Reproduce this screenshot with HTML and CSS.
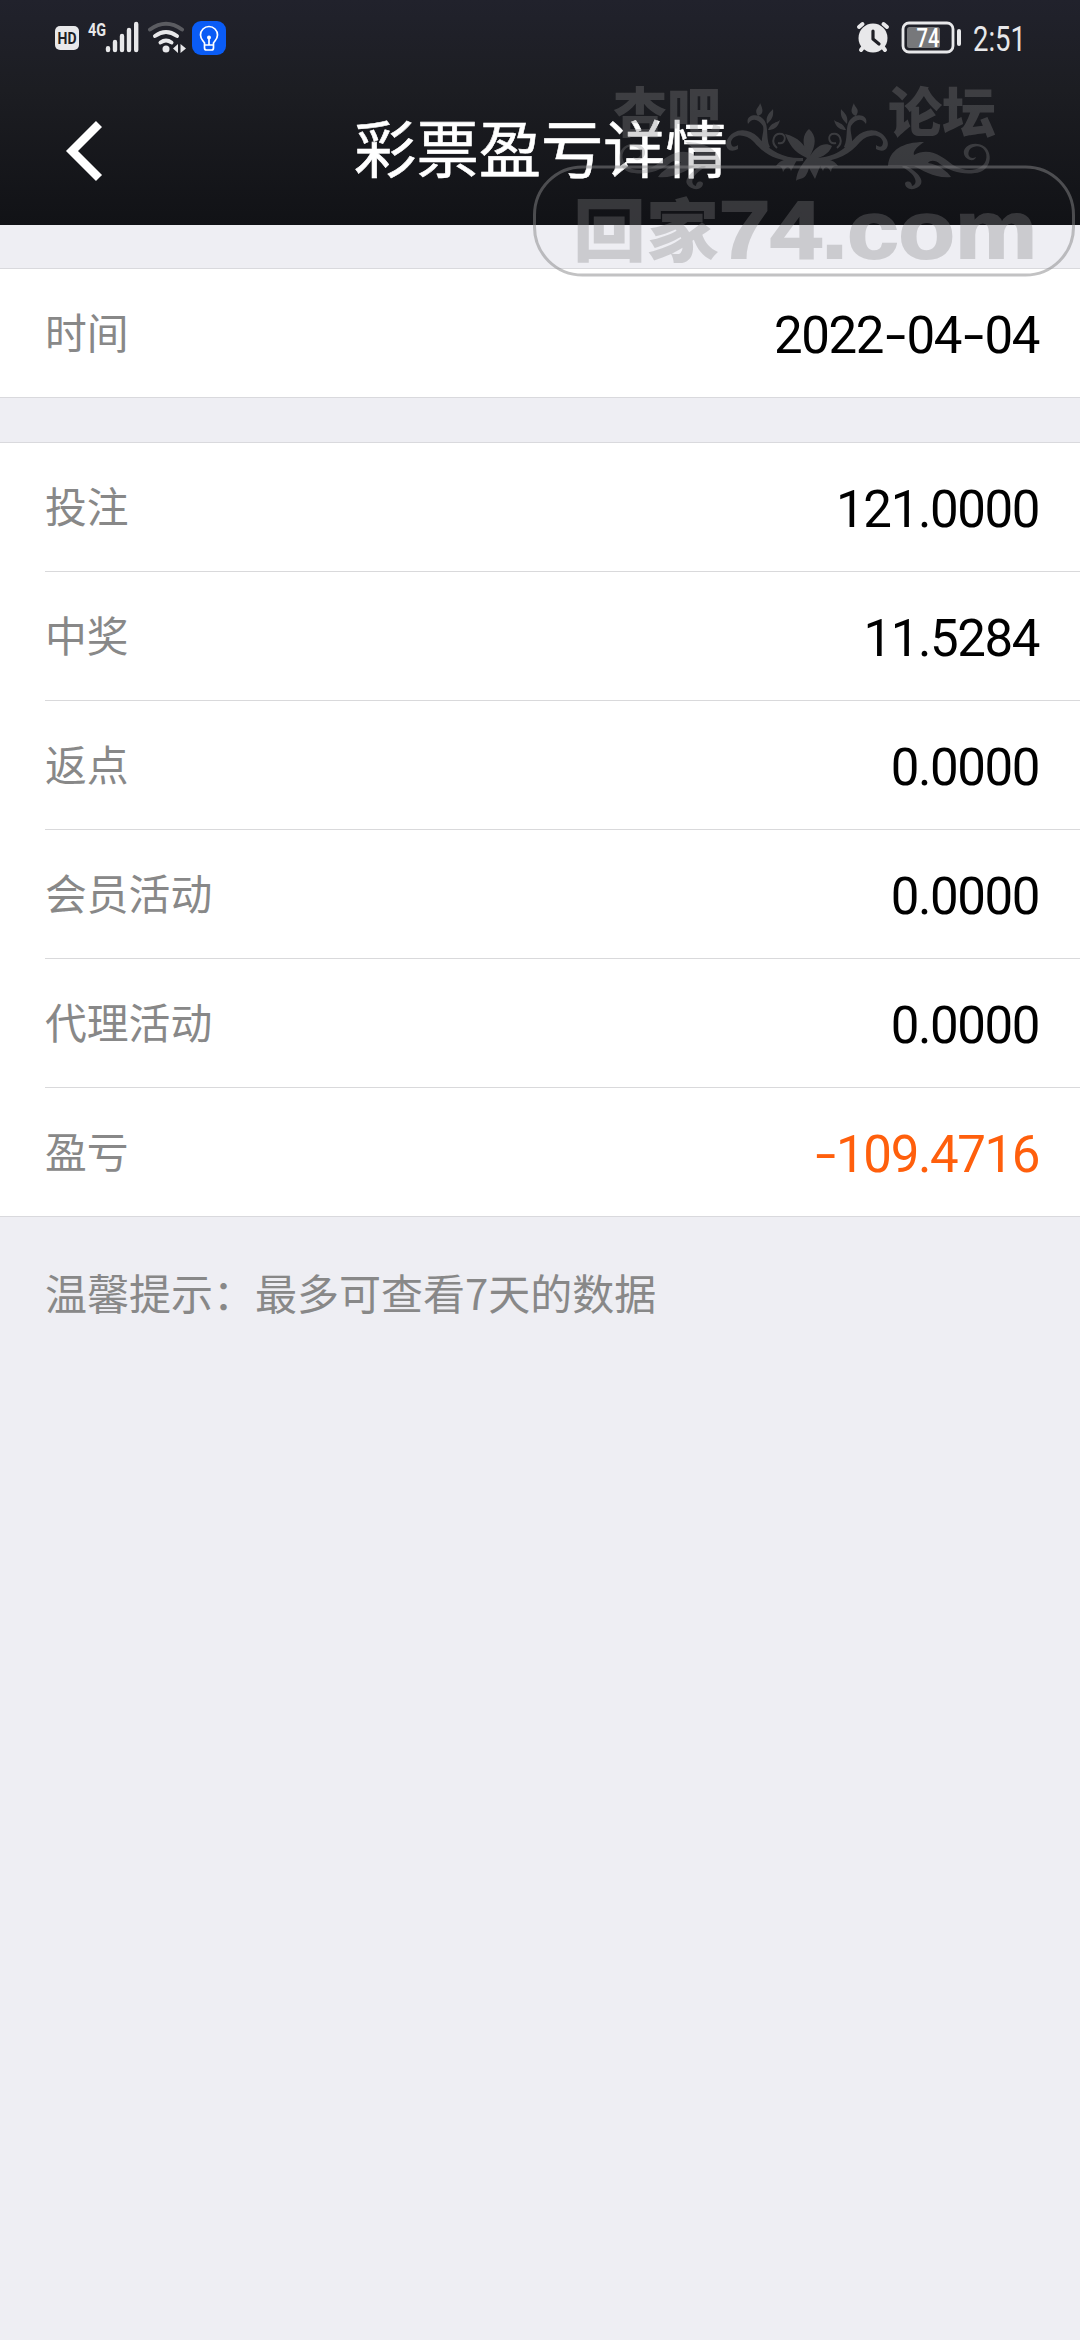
FILE: index.html
```html
<!DOCTYPE html>
<html lang="zh-CN">
<head>
<meta charset="utf-8">
<title>彩票盈亏详情</title>
<link rel="stylesheet" href="styles.css">
</head>
<body>
<header class="header">
  <div class="status">
    <svg class="status-left" width="180" height="40" viewBox="50 16 180 40">
      <rect x="55" y="26" width="24" height="24" rx="5" fill="#e8e8ea"/>
      <text x="57.5" y="43.5" class="hd" textLength="19" lengthAdjust="spacingAndGlyphs">HD</text>
      <text x="88" y="35.5" class="net" textLength="18" lengthAdjust="spacingAndGlyphs">4G</text>
      <g stroke="#e8e8ea" stroke-width="4.4" stroke-linecap="round">
        <path d="M108 48.2V50M115 42V50M122 36V50M129 30V50M136.2 24V50"/>
      </g>
      <g fill="none" stroke="#e8e8ea" stroke-width="4" stroke-linecap="round">
        <path d="M150 29.500Q166 18 182 29.500" stroke="#5b5c61"/>
        <path d="M155 36Q166 28 177 36M160.500 42.500Q166 38.500 171.500 42.500"/>
      </g>
      <circle cx="166" cy="49" r="3.500" fill="#e8e8ea"/>
      <path d="M178 44v9l-5-4.500zM180.500 44v9l5.500-4.500z" fill="#e8e8ea"/>
      <rect x="192" y="21" width="34" height="34" rx="9" fill="#0a5cf5"/>
      <g fill="none" stroke="#fff" stroke-width="1.700">
        <path d="M204.500 45V43C203 40.500 200.500 39 200.500 35a8.500 8.500 0 0 1 17 0c0 4-2.500 5.500-4 8V45zM204.500 45v3q0 2 2 2h5q2 0 2-2v-3M209 45V38"/>
      </g>
      <circle cx="209" cy="37.500" r="2" fill="#fff"/>
    </svg>
    <svg class="status-right" width="175" height="40" viewBox="855 16 175 40">
      <g stroke="#e8e8ea" stroke-width="4" stroke-linecap="round">
        <path d="M859 27l3.500-3M887 27l-3.500-3M864 46l-3 4M882 46l3 4"/>
      </g>
      <circle cx="873" cy="38" r="14.500" fill="#e8e8ea"/>
      <path d="M873 31v8l6 5" fill="none" stroke="#1e1f25" stroke-width="3.200" stroke-linecap="round" stroke-linejoin="round"/>
      <rect x="903" y="23" width="50" height="29" rx="6" fill="none" stroke="#e8e8ea" stroke-width="2.800"/>
      <rect x="907" y="27" width="33" height="21" rx="2.500" fill="#77787b"/>
      <rect x="957" y="29" width="4" height="17" rx="2" fill="#e8e8ea"/>
      <text x="916.500" y="46.500" class="battery" textLength="23" lengthAdjust="spacingAndGlyphs">74</text>
      <text x="973" y="51" class="clock" textLength="53" lengthAdjust="spacingAndGlyphs">2:51</text>
    </svg>
  </div>
  <nav class="nav">
    <svg class="back" width="38" height="62" viewBox="0 0 38 62"><path d="M34 4L7 31L34 58" fill="none" stroke="#fff" stroke-width="8.500"/></svg>
    <h1 class="title">彩票盈亏详情</h1>
  </nav>
</header>
<main>
  <section class="list list-date">
    <div class="row"><span class="label">时间</span><span class="value">2022<i class="dash">-</i>04<i class="dash">-</i>04</span></div>
  </section>
  <section class="list">
    <div class="row"><span class="label">投注</span><span class="value">121.0000</span></div>
    <div class="row"><span class="label">中奖</span><span class="value">11.5284</span></div>
    <div class="row"><span class="label">返点</span><span class="value">0.0000</span></div>
    <div class="row"><span class="label">会员活动</span><span class="value">0.0000</span></div>
    <div class="row"><span class="label">代理活动</span><span class="value">0.0000</span></div>
    <div class="row"><span class="label">盈亏</span><span class="value loss"><i class="dash">-</i>109.4716</span></div>
  </section>
  <p class="tip">温馨提示：最多可查看7天的数据</p>
</main>
<svg class="watermark" width="550" height="220" viewBox="530 60 550 220">
  <rect x="534.500" y="167" width="539" height="108" rx="48" fill="none" stroke="#858587" stroke-width="3" opacity=".5"/>
  <g class="mark">
    <text x="613" y="133" class="forum" textLength="108" lengthAdjust="spacingAndGlyphs">杏吧</text>
    <text x="888" y="133" class="forum" textLength="108" lengthAdjust="spacingAndGlyphs">论坛</text>
    <text x="573" y="256" class="site-cn" textLength="146" lengthAdjust="spacingAndGlyphs">回家</text>
    <text x="719" y="258" class="site" textLength="318" lengthAdjust="spacingAndGlyphs">74.com</text>
    <path d="M888 166C889 150 903 142 924 142C915 148 913 152 914 155C930 146 944 158 953 165C968 174 983 170 986 160C989 149 978 142 970 149C966 155 970 160 976 157C975 162 966 161 964 154C962 145 976 140 985 147C994 155 990 172 975 173C962 175 950 171 940 164C936 160 930 160 928 163C938 164 948 172 951 177C936 179 922 170 914 166Z"/>
    <path d="M904 165C914 169 924 178 921 184C917 191 905 191 905 183C908 180 912 182 912 186C919 184 916 174 902 167Z"/>
    <path d="M888 166C889 150 903 142 924 142C915 148 913 152 914 155C930 146 944 158 953 165C968 174 983 170 986 160C989 149 978 142 970 149C966 155 970 160 976 157C975 162 966 161 964 154C962 145 976 140 985 147C994 155 990 172 975 173C962 175 950 171 940 164C936 160 930 160 928 163C938 164 948 172 951 177C936 179 922 170 914 166Z" transform="translate(1609 0) scale(-1 1)"/>
    <path d="M704 165C694 169 684 178 687 184C691 191 703 191 703 183C700 180 696 182 696 186C689 184 692 174 706 167Z"/>
    <g id="spray">
      <path d="M738 149C729 154 724 147 727 140C733 128 748 127 758 137C768 148 780 159 803 158V161C779 163 765 155 754 142C745 133 733 134 731 142C731 147 734 148 738 145Z"/>
      <path d="M765 150C758 142 765 133 763 126C759 119 752 117 748 124C745 115 757 113 762 118C770 124 765 137 770 147Z"/>
      <path d="M758 116C753 109 760 107 760 103C764 111 763 114 758 116ZM767 124C765 115 771 112 773 109C774 117 771 120 767 124ZM768 130C771 122 777 123 780 120C778 128 773 130 768 130Z"/>
      <path d="M777 148C770 142 774 132 782 134C787 136 785 145 778 143" fill="none" stroke="#858587" stroke-width="2"/>
      <path d="M776 166C780 159 790 158 798 158L791 171C789 166 787 165 783 172C782 166 780 166 776 166Z"/>
    </g>
    <use href="#spray" transform="translate(1614 0) scale(-1 1)"/>
    <path d="M807 158C793 152 789 143 785 134C798 137 806 145 808 155C801 143 803 134 809 129C817 136 816 145 810 156C817 145 825 142 832 146C829 155 819 158 812 160C823 157 831 162 836 166L821 164L815 179L809 168C805 182 800 177 796 181C797 170 802 165 807 158Z"/>
  </g>
</svg>
</body>
</html>
```
FILE: styles.css
```css
* {
  box-sizing: border-box;
}

body {
  position: relative;
  min-height: 2340px;
  margin: 0;
  background: #eeeef3;
  font-family: "Noto Sans CJK SC", sans-serif;
  color: #000;
}

.header {
  display: flex;
  flex-direction: column;
  height: 225px;
  background: linear-gradient(#21222c 0, #1c1d22 90px, #111216 225px);
}

.status {
  display: flex;
  justify-content: space-between;
  height: 76px;
  padding: 16px 50px 0 50px;
}

.hd {
  font: 700 17px Roboto, sans-serif;
  fill: #1e1f25;
}

.net {
  font: 700 19px Roboto, sans-serif;
  fill: #e8e8ea;
}

.battery {
  font: 500 26px Roboto, sans-serif;
  fill: #fff;
}

.clock {
  font: 400 34.500px Roboto, sans-serif;
  fill: #e8e8ea;
}

.nav {
  display: grid;
  grid-template-columns: 180px 1fr 180px;
  align-items: center;
  height: 149px;
}

.back {
  margin: 1px 0 0 65px;
}

.title {
  margin: 0 0 10px 2px;
  color: #fff;
  font-size: 62.300px;
  font-weight: 400;
  line-height: 90px;
  text-align: center;
  -webkit-text-stroke: .6px #fff;
}

.list {
  margin-top: 44px;
  padding-left: 45px;
  border-top: 1px solid #d9d9dd;
  border-bottom: 1px solid #d9d9dd;
  background: #fff;
}

.list-date {
  margin-top: 43px;
}

.row {
  display: flex;
  align-items: center;
  justify-content: space-between;
  height: 129px;
  padding-right: 41px;
  border-bottom: 1px solid #d9d9db;
}

.row:last-child {
  height: 128px;
  border-bottom: 0;
}

.label {
  margin-bottom: 4px;
  color: #888;
  font-size: 41.800px;
  line-height: 60px;
}

.value {
  margin-top: 5px;
  font-family: Roboto, sans-serif;
  font-size: 51px;
  line-height: 60px;
  letter-spacing: -1.400px;
}

.loss {
  color: #ff5f0c;
}

.dash {
  display: inline-block;
  width: 23.500px;
  font-style: normal;
  text-align: center;
  transform: scaleX(1.450);
}

.tip {
  margin: 45px 45px;
  color: #888;
  font-size: 42px;
  line-height: 60px;
}

.watermark {
  position: absolute;
  top: 60px;
  left: 530px;
}

.mark {
  fill: #858587;
  opacity: .32;
}

.forum {
  font: 900 54px "Noto Sans CJK SC", sans-serif;
}

.site-cn {
  font: 900 68px "Noto Sans CJK SC", sans-serif;
}

.site {
  font: 700 82px "Liberation Sans", sans-serif;
  stroke: #858587;
  stroke-width: 2px;
}
```
